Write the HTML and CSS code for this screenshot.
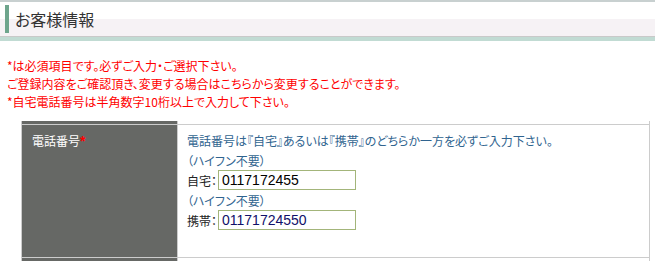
FILE: index.html
```html
<!DOCTYPE html>
<html lang="ja">
<head>
  <meta charset="UTF-8">
  <title>お客様情報</title>
  <link rel="stylesheet" href="styles.css">
</head>
<body>
  <div class="page-head">
    <h2 class="page-title">お客様情報</h2>
  </div>

  <div class="notes">
    <p>*は必須項目です。必ずご入力・ご選択下さい。</p>
    <p>ご登録内容をご確認頂き、変更する場合はこちらから変更することができます。</p>
    <p>*自宅電話番号は半角数字10桁以上で入力して下さい。</p>
  </div>

  <div class="form-table">
    <div class="form-row edge">
      <div class="form-th"></div>
      <div class="form-td"></div>
    </div>
    <div class="form-row main">
      <div class="form-th">電話番号<span class="req">*</span></div>
      <div class="form-td">
        <div class="line info">電話番号は『自宅』あるいは『携帯』のどちらか一方を必ずご入力下さい。</div>
        <div class="line info">（ハイフン不要）</div>
        <div class="line">自宅：<input class="tel" type="text" value="0117172455"></div>
        <div class="line info">（ハイフン不要）</div>
        <div class="line">携帯：<input class="tel mobile" type="text" value="01171724550"></div>
      </div>
    </div>
    <div class="form-row edge">
      <div class="form-th"></div>
      <div class="form-td"></div>
    </div>
  </div>
</body>
</html>
```

FILE: styles.css
```css
body {
  margin: 0;
  font-family: "Noto Sans CJK JP", "Liberation Sans", sans-serif;
  font-size: 12px;
  font-feature-settings: "palt";
  color: #222;
  background: #fff;
}
.page-head {
  border-top: 2px solid #c8d0d0;
  border-bottom: 1px solid #c9c9c9;
  box-shadow: 0 4px 0 #c1dbd3;
  background: linear-gradient(#fff 0, #fff 17px, #f6f2f5 17px);
  height: 31px;
  padding: 3px 0 0 5px;
  box-sizing: content-box;
  margin-bottom: 4px;
}
.page-title {
  margin: 0;
  height: 28px;
  border-left: 4px solid #6ea58c;
  padding-left: 6px;
  font-size: 16px;
  font-weight: normal;
  line-height: 28px;
  color: #333;
}
.notes {
  margin: 20px 0 0 7px;
  color: #f00;
}
.notes p {
  margin: 0;
  line-height: 18px;
}
.form-table {
  margin: 10px 0 0 21px;
  width: 629px;
  box-sizing: border-box;
  border-left: 1px solid #ccc;
  border-right: 1px solid #ccc;
}
.form-row {
  display: flex;
}
.form-row.edge {
  height: 3px;
}
.form-row.main {
  border-top: 1px solid #ccc;
  border-bottom: 1px solid #ccc;
  height: 134px;
  box-sizing: border-box;
}
.form-th {
  width: 156px;
  background: #666865;
  border-right: 1px solid #ccc;
  color: #fff;
  padding: 6px 0 0 10px;
  box-sizing: border-box;
  line-height: 20px;
  flex-shrink: 0;
}
.edge .form-th {
  padding: 0;
}
.req {
  color: #f00;
  font-family: "Liberation Sans", sans-serif;
  font-size: 14px;
  font-weight: bold;
}
.form-td {
  flex: 1;
  padding: 5px 0 0 9px;
}
.edge .form-td {
  padding: 0;
}
.line {
  height: 20px;
  display: flex;
  align-items: center;
}
.info {
  color: #30648f;
}
.tel {
  width: 138px;
  height: 20px;
  box-sizing: border-box;
  margin: 0 0 0 1px;
  padding: 0 3px;
  border: 1px solid #a3b57a;
  font-family: "Liberation Sans", sans-serif;
  font-size: 14px;
  color: #000;
  outline: none;
}
.tel.mobile {
  color: #10106a;
}
```
